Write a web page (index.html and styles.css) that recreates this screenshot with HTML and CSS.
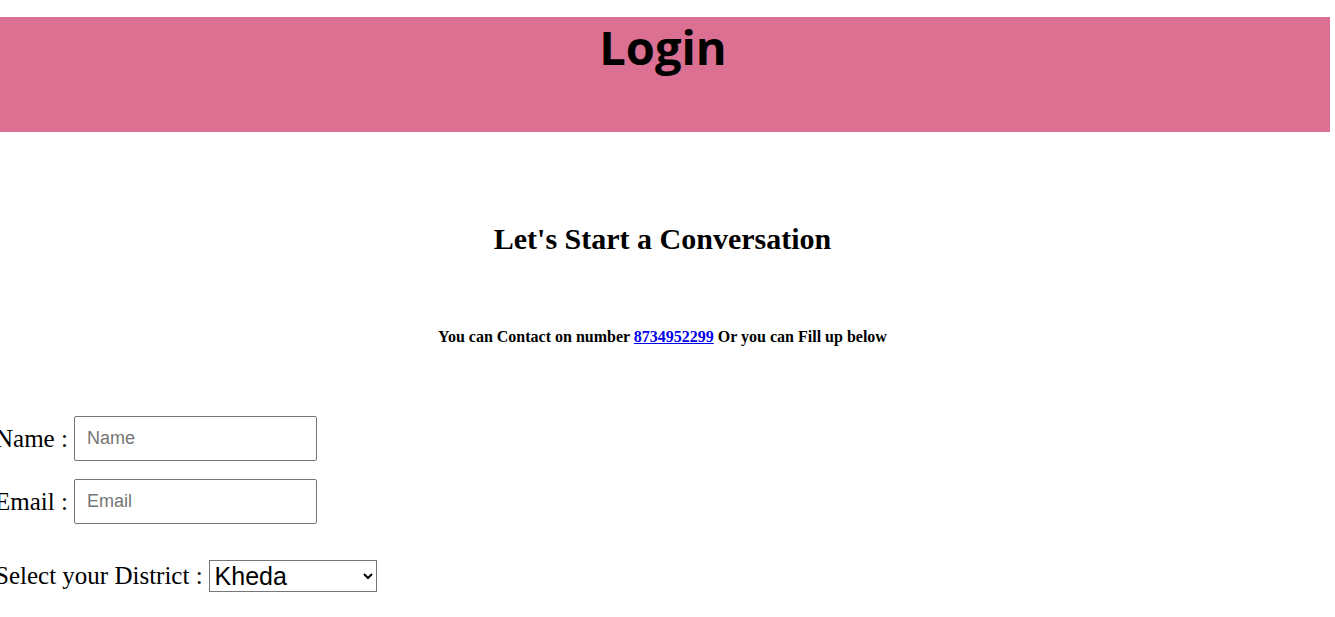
FILE: index.html
```html
<!DOCTYPE html>
<html>
<head>
<meta charset="utf-8">
<title>Login</title>
<link rel="stylesheet" href="styles.css">
</head>
<body>
<header class="banner">
  <h1 class="banner-title">Login</h1>
</header>
<main class="content">
  <h2 class="intro-title">Let's Start a Conversation</h2>
  <p class="contact">You can Contact on number <a href="#" class="phone">8734952299</a> Or you can Fill up below</p>
  <form class="form">
    <div class="row">
      <label class="label" for="name">Name :</label>
      <input class="field" id="name" type="text" placeholder="Name">
    </div>
    <div class="row">
      <label class="label" for="email">Email :</label>
      <input class="field" id="email" type="text" placeholder="Email">
    </div>
    <div class="row row-select">
      <label class="label" for="district">Select your District :</label>
      <select class="select" id="district">
        <option>Kheda</option>
        <option>Anand</option>
        <option>Ahmedabad</option>
      </select>
    </div>
  </form>
</main>
</body>
</html>
```

FILE: styles.css
```css
html, body {
  margin: 0;
  padding: 0;
  background: #ffffff;
}

body {
  font-family: "Liberation Serif", "Times New Roman", serif;
  color: #000;
  overflow: hidden;
}

.banner {
  margin-top: 17px;
  width: 1330px;
  height: 115px;
  box-sizing: border-box;
  padding-right: 4px;
  background: #db7093;
  display: flex;
  justify-content: center;
  align-items: flex-start;
}

.banner-title {
  margin: 0;
  font-family: "Open Sans", Lato, sans-serif;
  font-weight: 700;
  font-size: 47px;
  line-height: 60px;
}

.content {
  display: flex;
  flex-direction: column;
  padding-right: 10px;
}

.intro-title {
  margin: 90px 0 0;
  text-align: center;
  font-size: 30px;
  line-height: 34px;
  font-weight: 700;
}

.contact {
  margin: 72px 0 0;
  text-align: center;
  font-size: 16px;
  line-height: 18px;
  font-weight: 700;
}

.phone {
  color: #0000ee;
}

.form {
  display: flex;
  flex-direction: column;
  gap: 18px;
  margin: 70px 0 0 -5px;
}

.row {
  display: flex;
  align-items: center;
  gap: 6px;
}

.row-select {
  margin-top: 18px;
}

.label {
  font-size: 25px;
  line-height: 28px;
}

.field {
  width: 243px;
  height: 45px;
  box-sizing: border-box;
  border: 1px solid #767676;
  border-radius: 2px;
  padding: 0 12px;
  font-family: Arial, "Liberation Sans", sans-serif;
  font-size: 18px;
  color: #000;
}

.field::placeholder {
  color: #757575;
}

.select {
  width: 168px;
  height: 32px;
  box-sizing: border-box;
  font-family: Arial, "Liberation Sans", sans-serif;
  font-size: 25px;
  border: 1px solid #767676;
  border-radius: 0;
  background: #fff;
  color: #000;
  padding: 0 1px;
}
```
